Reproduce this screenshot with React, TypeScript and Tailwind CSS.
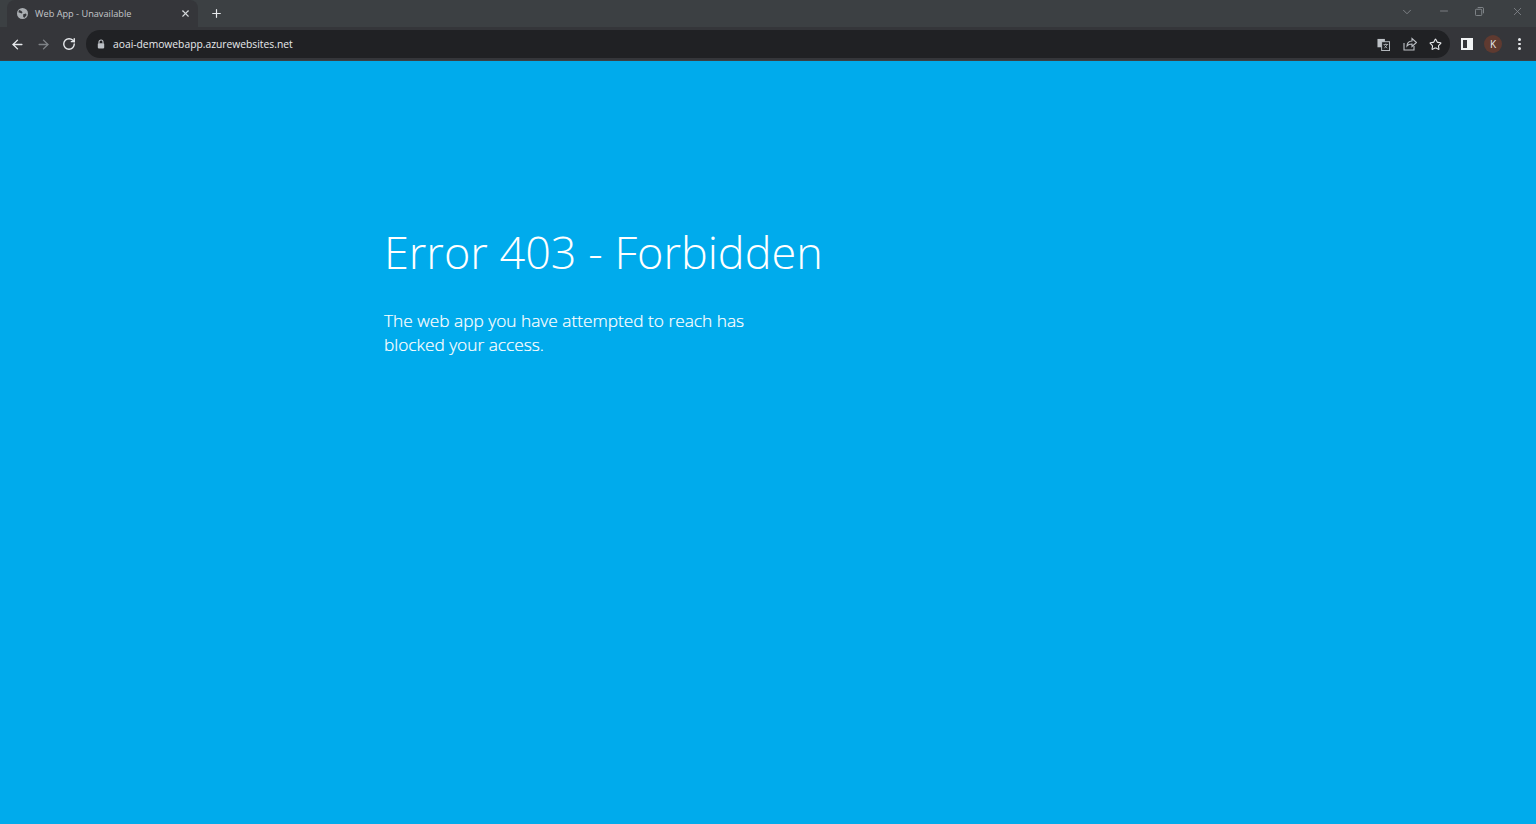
import { ArrowLeft, ArrowRight, ChevronDown, Minus, Plus, RotateCw, Star, X } from "lucide-react";

const ui = "font-['Open_Sans',sans-serif]";

export default function App() {
  return (
    <div className="flex h-[824px] w-full flex-col overflow-hidden bg-[#00abec]">
      {/* tab strip */}
      <div className={`flex h-[27px] items-end bg-[#3c4043] pl-[7px] ${ui}`}>
        <div className="flex h-[27px] w-[191px] items-center rounded-t-lg bg-[#35363a] pl-[10px] pr-[7px]">
          <svg viewBox="0 0 16 16" className="h-[11px] w-[11px] shrink-0">
            <circle cx="8" cy="8" r="8" fill="#a9adb1" />
            <path d="M3 3l3 1 2 2-1 2-3-1-2-1zM9 9l4-1 1 2-3 4-2-1z" fill="#35363a" />
          </svg>
          <span className="ml-[7px] flex-1 pt-[1px] text-[9.200px] text-[#c4c7ca]">Web App - Unavailable</span>
          <X className="h-[11px] w-[11px] text-[#d5d8db]" strokeWidth={2.4} />
        </div>
        <div className="flex h-[27px] w-[36px] items-center justify-center">
          <Plus className="h-[13px] w-[13px] text-[#e8eaed]" strokeWidth={2.2} />
        </div>
        <div className="ml-auto flex h-[27px] items-start pt-[5px] text-[#8a8e93]">
          <ChevronDown className="mr-[24px] h-[14px] w-[14px]" strokeWidth={1.4} />
          <Minus className="mr-[25px] h-[12px] w-[12px]" strokeWidth={1.6} />
          <svg viewBox="0 0 10 10" className="mr-[27px] mt-[2px] h-[9px] w-[9px]" fill="none" stroke="currentColor">
            <rect x="0.5" y="2.5" width="7" height="7" rx="1" />
            <path d="M3 0.5h5a1.5 1.5 0 0 1 1.500 1.500v5" />
          </svg>
          <X className="mr-[12px] h-[13px] w-[13px]" strokeWidth={1.4} />
        </div>
      </div>

      {/* toolbar */}
      <div className={`flex h-[34px] items-center border-b border-[#3c4043] bg-[#35363a] pt-[1px] ${ui}`}>
        <ArrowLeft className="ml-[10px] h-[15px] w-[15px] text-[#e8eaed]" strokeWidth={2.2} />
        <ArrowRight className="ml-[11px] h-[15px] w-[15px] text-[#7f8387]" strokeWidth={2.2} />
        <RotateCw className="ml-[11px] h-[14px] w-[14px] text-[#e8eaed]" strokeWidth={2.4} />
        <div className="ml-[10px] flex h-[28px] w-[1364px] items-center rounded-full bg-[#202124] pl-[11px] pr-[8px]">
          <svg viewBox="0 0 10 12" className="h-[10px] w-[8px] shrink-0">
            <path d="M2.500 5.500V3.500a2.500 2.500 0 0 1 5 0v2" fill="none" stroke="#bdc1c6" strokeWidth="1.400" />
            <rect x="1" y="5" width="8" height="6.500" rx="1" fill="#bdc1c6" />
          </svg>
          <span className="ml-[8px] flex-1 pt-[1px] text-[10.300px] text-[#e8eaed]">aoai-demowebapp.azurewebsites.net</span>
          <svg viewBox="0 0 14 14" className="mr-[13px] h-[13px] w-[13px]">
            <rect x="0.500" y="1" width="8" height="9" fill="#bdc1c6" />
            <rect x="5" y="4" width="8.500" height="9.500" fill="#202124" stroke="#bdc1c6" />
            <path d="M7 7h5M9.500 6v1M8 11l3-4M8 8l3 3" stroke="#bdc1c6" fill="none" strokeWidth="0.800" />
          </svg>
          <svg viewBox="0 0 14 14" className="mr-[12px] h-[14px] w-[14px]" fill="none" stroke="#bdc1c6" strokeWidth="1.100">
            <path d="M1 6v7h10V9" />
            <path d="M4 9c0-3 2-5 5-5V1.500l4.500 4-4.500 4V7C7 7 5 7.500 4 9z" />
          </svg>
          <Star className="h-[13px] w-[13px] text-[#e8eaed]" strokeWidth={2} />
        </div>
        <div className="ml-[11px] flex h-[12px] w-[12px] justify-end border-2 border-[#f1f3f4]">
          <div className="h-full w-[4px] bg-[#f1f3f4]" />
        </div>
        <div className="ml-[11px] flex h-[18px] w-[18px] items-center justify-center rounded-full bg-[#5f3a30] text-[10px] text-[#e8eaed]">
          K
        </div>
        <div className="ml-[16px] flex flex-col gap-[2px]">
          <div className="h-[2.500px] w-[2.500px] rounded-full bg-[#e8eaed]" />
          <div className="h-[2.500px] w-[2.500px] rounded-full bg-[#e8eaed]" />
          <div className="h-[2.500px] w-[2.500px] rounded-full bg-[#e8eaed]" />
        </div>
      </div>

      {/* page */}
      <main className="flex-1 pl-[384px] pt-[161px] font-['Open_Sans',sans-serif] text-white">
        <h1 className="text-[45px] leading-[60px] font-light">Error 403 - Forbidden</h1>
        <p className="mt-[27px] w-[400px] text-[17.300px] leading-[24px] font-light [-webkit-text-stroke:0.2px_white]">
          The web app you have attempted to reach has blocked your access.
        </p>
      </main>
    </div>
  );
}
